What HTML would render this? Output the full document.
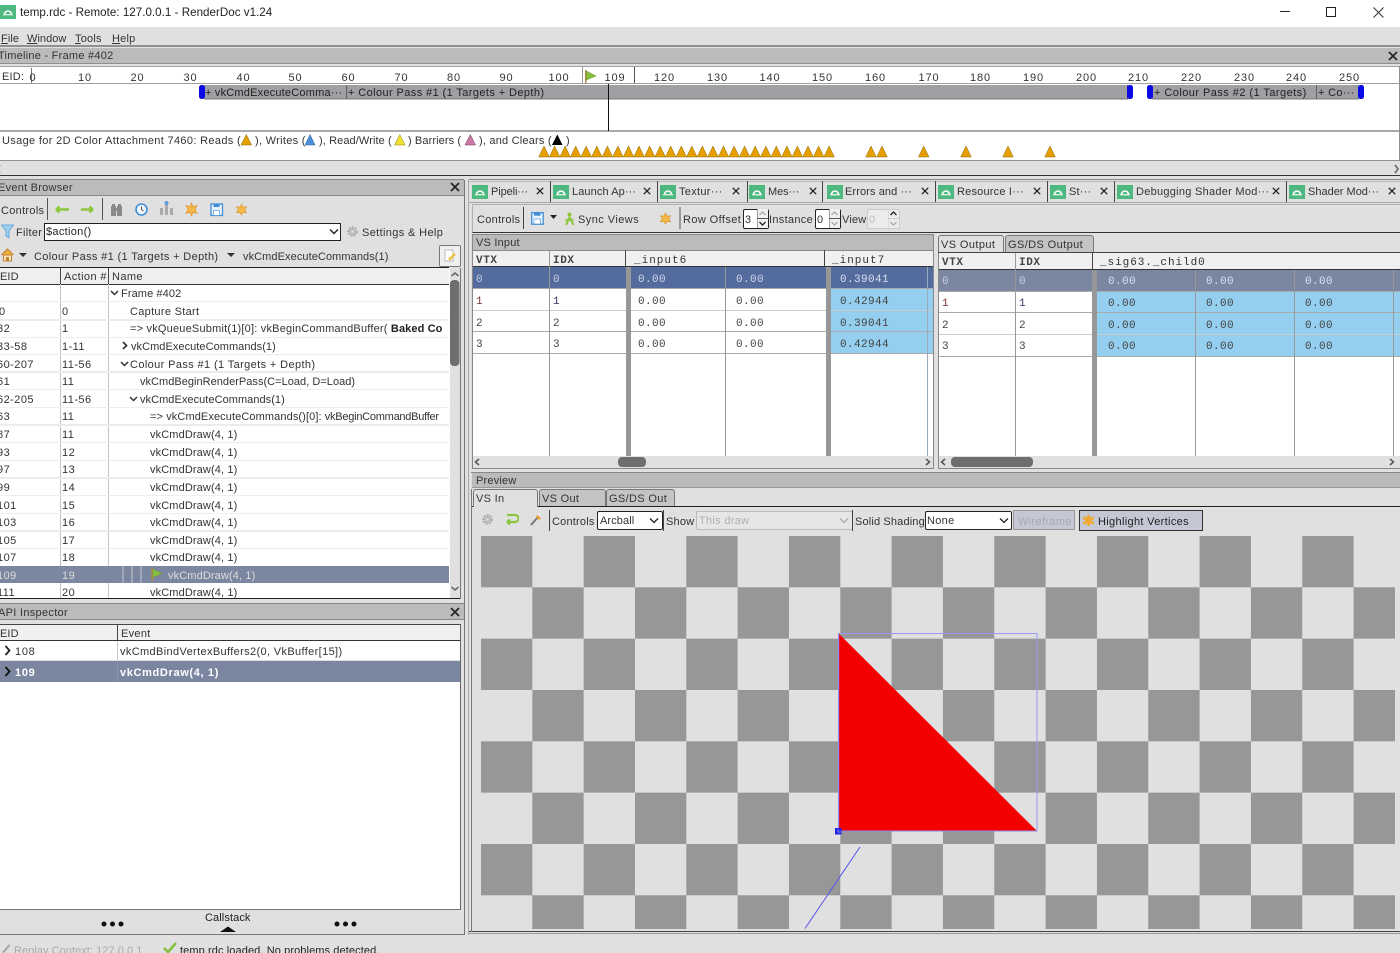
<!DOCTYPE html>
<html><head><meta charset="utf-8"><title>temp.rdc - Remote: 127.0.0.1 - RenderDoc v1.24</title>
<style>
html,body{margin:0;padding:0;width:1400px;height:953px;overflow:hidden;background:#e0e0e0}
body{position:relative;font-family:"Liberation Sans","Noto Sans CJK JP",sans-serif;font-size:11px;color:#333;letter-spacing:.45px}
div,svg{position:absolute}
.t{white-space:nowrap;line-height:14px;height:14px;margin-top:1px}
.b{background:#000}
.m{font-family:"Liberation Mono",monospace;font-size:11px;letter-spacing:.6px;color:#444;margin-top:2px}
.mb{font-family:"Liberation Mono",monospace;font-size:11px;font-weight:bold;letter-spacing:.6px;color:#444;margin-top:2px}
.bar{background:#bbb;height:15px}
.x{font-size:0}
.w{background:#fff}
.s{color:#ddd}
.d{letter-spacing:.12px}
</style></head><body>
<svg width="0" height="0" style="left:0;top:0"><defs>
<symbol id="ic" viewBox="0 0 16 14"><rect width="16" height="14" fill="#4db87f"/><path d="M4.500 9.500a3.500 3.500 0 0 1 7 0" fill="none" stroke="#fff" stroke-width="1.600"/><rect x="3" y="9" width="10" height="1.400" fill="#d8f0e2"/></symbol>
<symbol id="cl" viewBox="0 0 10 10"><path d="M1 1L9 9M9 1L1 9" stroke="#222" stroke-width="1.600" fill="none"/></symbol>
<symbol id="star" viewBox="0 0 14 14"><path d="M7 1l1.600 3.500 3.900-.5-2 3.300 2 3.300-3.900-.4L7 13l-1.600-2.800-3.900.4 2-3.300-2-3.300 3.900.5z" fill="#f5b84a" stroke="#d89020" stroke-width=".6"/></symbol>
<symbol id="flag" viewBox="0 0 12 14"><rect x="0" y="0" width="1.600" height="14" fill="#b08a40"/><path d="M1.600 1L11.500 6 1.600 10z" fill="#86c040" stroke="#6a9a30" stroke-width=".5"/></symbol>
</defs></svg>

<!-- title bar -->
<div class="w" style="left:0;top:0;width:1400px;height:27px"></div>
<svg style="left:0;top:4px" width="16" height="16"><use href="#ic" width="16" height="16"/></svg>
<div class="t" style="left:20px;top:5px;font-size:11.600px;letter-spacing:.02px;color:#222">temp.rdc - Remote: 127.0.0.1 - RenderDoc v1.24</div>
<div style="left:1280px;top:11px;width:10px;height:1px;background:#222"></div>
<div style="left:1326px;top:7px;width:8px;height:8px;border:1.500px solid #222"></div>
<svg style="left:1373px;top:7px" width="11" height="11"><path d="M.5 .5L10.500 10.500M10.500 .5L.5 10.500" stroke="#333" stroke-width="1"/></svg>

<!-- menu -->
<div class="t" style="left:1px;top:31px;letter-spacing:.1px"><u>F</u>ile</div>
<div class="t" style="left:27px;top:31px;letter-spacing:.05px"><u>W</u>indow</div>
<div class="t" style="left:75px;top:31px;letter-spacing:.2px"><u>T</u>ools</div>
<div class="t" style="left:112px;top:31px;letter-spacing:.2px"><u>H</u>elp</div>
<div style="left:0;top:45px;width:1400px;height:2px;background:#909090"></div>
<div class="b" style="left:0;top:47.500px;width:1400px;height:1px"></div>

<!-- timeline -->
<div class="bar" style="left:0;top:48px;width:1400px"></div>
<div class="t" style="left:-2px;top:48px;letter-spacing:.25px">Timeline - Frame #402</div>
<svg style="left:1388px;top:51px" width="10" height="10"><use href="#cl" width="10" height="10"/></svg>
<div style="left:0;top:63px;width:1400px;height:1px;background:#8f8f8f"></div>
<div class="w" style="left:0;top:67px;width:1399px;height:93px"></div>
<div style="left:0;top:66px;width:1400px;height:1px;background:#a0a0a0"></div>
<div style="left:0;top:83px;width:1399px;height:1px;background:#a0a0a0"></div>
<div style="left:0;top:130px;width:1399px;height:2px;background:#a8a8a8"></div>
<div style="left:0;top:160px;width:1399px;height:1px;background:#909090"></div>
<div style="left:1399px;top:66px;width:1px;height:95px;background:#909090"></div>
<div style="left:0;top:175px;width:1400px;height:1px;background:#333"></div>
<div class="t" style="left:2px;top:69px;letter-spacing:.2px">EID:</div>
<div style="left:31px;top:68px;width:1px;height:15px;background:#777"></div>
<svg style="left:0;top:0" width="1400" height="180" font-family="Liberation Sans" font-size="11" fill="#333" text-anchor="middle" letter-spacing=".9">
<text x="33" y="81">0</text><text x="85" y="81">10</text><text x="137.500" y="81">20</text><text x="190.500" y="81">30</text><text x="243.500" y="81">40</text><text x="295.500" y="81">50</text><text x="348.500" y="81">60</text><text x="401.500" y="81">70</text><text x="454" y="81">80</text><text x="506.500" y="81">90</text><text x="559" y="81">100</text><text x="615" y="81">109</text><text x="664.500" y="81">120</text><text x="717.500" y="81">130</text><text x="770" y="81">140</text><text x="822.500" y="81">150</text><text x="875.500" y="81">160</text><text x="929" y="81">170</text><text x="980.500" y="81">180</text><text x="1033.500" y="81">190</text><text x="1086.500" y="81">200</text><text x="1138.500" y="81">210</text><text x="1191.500" y="81">220</text><text x="1244.500" y="81">230</text><text x="1296.500" y="81">240</text><text x="1349.500" y="81">250</text>
<rect x="582" y="67" width="1" height="16" fill="#999"/><rect x="634" y="67" width="1" height="16" fill="#555"/>
<path d="M585 70h1.500v13H585z" fill="#b08a40"/><path d="M586.500 71L596 76L586.500 80z" fill="#86c040" stroke="#6a9a30" stroke-width=".5"/>
<rect x="204" y="85" width="924" height="14" fill="#a0a0a4"/>
<rect x="1152" y="85" width="207" height="14" fill="#a0a0a4"/>
<rect x="204" y="98.500" width="924" height="1" fill="#777"/><rect x="1152" y="98.500" width="207" height="1" fill="#777"/>
<rect x="346" y="85" width="1.200" height="14" fill="#666"/><rect x="1316" y="85" width="1" height="14" fill="#666"/><rect x="1127" y="85" width="1" height="14" fill="#666"/>
<rect x="199" y="85" width="6" height="14" rx="2.500" fill="#0a0ae6"/><rect x="1127" y="85" width="6" height="14" rx="2.500" fill="#0a0ae6"/><rect x="1147" y="85" width="6" height="14" rx="2.500" fill="#0a0ae6"/><rect x="1358" y="85" width="6" height="14" rx="2.500" fill="#0a0ae6"/>
<rect x="608" y="84" width="1" height="47" fill="#111"/>
<path fill="#e69f00" stroke="#8a6a10" stroke-width=".5" d="M538.700 157l5.300-11 5.300 11zM549.300 157l5.300-11 5.300 11zM559.800 157l5.300-11 5.300 11zM570.400 157l5.300-11 5.300 11zM580.900 157l5.300-11 5.300 11zM591.500 157l5.300-11 5.300 11zM602.100 157l5.300-11 5.300 11zM612.600 157l5.300-11 5.300 11zM623.200 157l5.300-11 5.300 11zM633.700 157l5.300-11 5.300 11zM644.300 157l5.300-11 5.300 11zM654.900 157l5.300-11 5.300 11zM665.400 157l5.300-11 5.300 11zM676 157l5.300-11 5.300 11zM686.500 157l5.300-11 5.300 11zM697.100 157l5.300-11 5.300 11zM707.700 157l5.300-11 5.300 11zM718.200 157l5.300-11 5.300 11zM728.800 157l5.300-11 5.300 11zM739.300 157l5.300-11 5.300 11zM749.900 157l5.300-11 5.300 11zM760.500 157l5.300-11 5.300 11zM771 157l5.300-11 5.300 11zM781.600 157l5.300-11 5.300 11zM792.100 157l5.300-11 5.300 11zM802.700 157l5.300-11 5.300 11zM813.300 157l5.300-11 5.300 11zM823.800 157l5.300-11 5.300 11zM865.700 157l5.300-11 5.300 11zM876.700 157l5.300-11 5.300 11zM918.400 157l5.300-11 5.300 11zM960.700 157l5.300-11 5.300 11zM1002.700 157l5.300-11 5.300 11zM1044.700 157l5.300-11 5.300 11z"/>
<path fill="#e69f00" stroke="#8a6a10" stroke-width=".5" d="M241 145l5.300-10.500 5.300 10.500z"/>
<path fill="#4a90d9" stroke="#2a5a90" stroke-width=".5" d="M305 145l5-10.500 5 10.500z"/>
<path fill="#f0e030" stroke="#8a8010" stroke-width=".5" d="M394.500 145l5.300-10.500 5.300 10.500z"/>
<path fill="#cc79a7" stroke="#704060" stroke-width=".5" d="M465 145l5.300-10.500 5.300 10.500z"/>
<path fill="#000" d="M552 145l5.300-10.500 5.300 10.500z"/>
<path d="M1395 165l3 4-3 4" fill="none" stroke="#666" stroke-width="1.600"/>
<path d="M0 165l-3 4 3 4" fill="none" stroke="#666" stroke-width="1.600"/>
</svg>
<div class="t" style="left:205px;top:85px;letter-spacing:.2px;color:#222">+ vkCmdExecuteComma···</div>
<div class="t" style="left:348px;top:85px;letter-spacing:.4px;color:#222">+ Colour Pass #1 (1 Targets + Depth)</div>
<div class="t" style="left:1154px;top:85px;letter-spacing:.45px;color:#222">+ Colour Pass #2 (1 Targets)</div>
<div class="t" style="left:1318px;top:85px;letter-spacing:.3px;color:#222">+ Co···</div>
<div class="t" style="left:2px;top:133px;letter-spacing:.34px">Usage for 2D Color Attachment 7460: Reads (</div>
<div class="t" style="left:255px;top:133px;letter-spacing:.3px">), Writes (</div>
<div class="t" style="left:319px;top:133px;letter-spacing:.1px">), Read/Write (</div>
<div class="t" style="left:408px;top:133px;letter-spacing:.1px">) Barriers (</div>
<div class="t" style="left:479px;top:133px;letter-spacing:.2px">), and Clears (</div>
<div class="t" style="left:566px;top:133px">)</div>

<!-- Event browser -->
<div style="left:0;top:179px;width:464px;height:1px;background:#888"></div>
<div class="bar" style="left:0;top:180px;width:464px"></div>
<div class="t" style="left:-2px;top:180px;letter-spacing:.25px">Event Browser</div>
<svg style="left:450px;top:182px" width="10" height="10"><use href="#cl" width="10" height="10"/></svg>
<div style="left:0;top:195px;width:464px;height:1px;background:#888"></div>
<div style="left:464px;top:180px;width:1px;height:755px;background:#777"></div>
<div style="left:468px;top:180px;width:1px;height:755px;background:#aaa"></div>
<div class="t" style="left:1px;top:203px;letter-spacing:.3px">Controls</div>
<div style="left:47px;top:198px;width:1px;height:22px;background:#555"></div>
<div style="left:102px;top:198px;width:1px;height:22px;background:#555"></div>
<svg style="left:0;top:196px" width="260" height="28">
<path d="M56 13.500h7m-7 0l3.500-3m-3.500 3l3.500 3M63 13.500h6" stroke="#8dc63f" stroke-width="2.400" fill="none"/>
<path d="M81 13.500h12m0 0l-3.500-3m3.500 3l-3.500 3" stroke="#8dc63f" stroke-width="2.400" fill="none"/>
<path d="M112 8h3v2h1v10h-5V10h1zM118 8h3v2h1v10h-5V10h1zM116 12h1v3h-1z" fill="#8a8a8a"/>
<circle cx="141.500" cy="13.500" r="5.500" fill="#f0f4ff" stroke="#3f8fd8" stroke-width="1.600"/><path d="M141.500 10.500v3l2 1.500" stroke="#555" fill="none"/>
<path d="M160 12h3v7h-3zM165 8h3v11h-3zM170 12h3v7h-3z" fill="#aaa"/><circle cx="166.500" cy="7" r="2" fill="#5a9ed8"/>
<path d="M191.500 7l1.500 4 4-1.500-2 4 2 4-4-1.500-1.500 4-1.500-4-4 1.500 2-4-2-4 4 1.500z" fill="#f5b84a" stroke="#e09020" stroke-width=".7"/>
<rect x="211" y="8" width="11.500" height="11.500" fill="#e8f2fb" stroke="#3f8fd8" stroke-width="1.300"/><rect x="213.500" y="8" width="6" height="3" fill="#3f8fd8"/><rect x="213.500" y="14.500" width="6" height="5" fill="#fff" stroke="#3f8fd8" stroke-width=".6"/>
</svg>
<svg style="left:235px;top:203px" width="13" height="13"><use href="#star" width="13" height="13"/></svg>
<svg style="left:1px;top:224px" width="13" height="16"><path d="M.5 1h12L8 7v7l-3-2V7z" fill="#9fd0f0" stroke="#6aa8d8"/></svg>
<div class="t" style="left:16px;top:225px;letter-spacing:.3px">Filter</div>
<div class="w" style="left:44px;top:223px;width:295px;height:16px;border:1px solid #222"></div>
<div class="t" style="left:46px;top:224px;letter-spacing:.3px;color:#222">$action()</div>
<svg style="left:329px;top:228px" width="10" height="8"><path d="M1 1.500l4 4 4-4" fill="none" stroke="#222" stroke-width="1.400"/></svg>
<svg style="left:346px;top:225px" width="13" height="13"><circle cx="6.500" cy="6.500" r="4" fill="none" stroke="#aaa" stroke-width="2.400" stroke-dasharray="2 1"/><circle cx="6.500" cy="6.500" r="2" fill="#ddd" stroke="#aaa"/></svg>
<div class="t" style="left:362px;top:225px;letter-spacing:.36px">Settings &amp; Help</div>
<svg style="left:1px;top:248px" width="13" height="14"><path d="M.5 7L6.500 1l6 6" fill="#f0b040" stroke="#c08030"/><path d="M2.500 7h8v6h-8z" fill="#f8e8c0" stroke="#c08030"/><rect x="5" y="9" width="3" height="4" fill="#c08030"/></svg>
<svg style="left:19px;top:253px" width="8" height="5"><path d="M0 0h8L4 4z" fill="#333"/></svg>
<svg style="left:227px;top:253px" width="8" height="5"><path d="M0 0h8L4 4z" fill="#333"/></svg>
<div class="t" style="left:34px;top:249px;letter-spacing:.35px">Colour Pass #1 (1 Targets + Depth)</div>
<div class="t" style="left:243px;top:249px;letter-spacing:.08px">vkCmdExecuteCommands(1)</div>
<div style="left:439px;top:245px;width:20px;height:20px;border:1px solid #777;border-radius:2px;background:#efefef"></div>
<svg style="left:443px;top:249px" width="14" height="14"><path d="M2 1h8v11H2z" fill="#fff" stroke="#bbb"/><path d="M5 10l6-6 2 1.500-6 6z" fill="#f0c040"/></svg>

<!-- event table -->
<div class="w" style="left:0;top:268px;width:450px;height:330px"></div>
<div style="left:0;top:267px;width:449px;height:16px;background:#f0f0f0;border-top:1px solid #222;border-bottom:1px solid #333"></div>
<div class="t" style="left:0;top:269px;letter-spacing:.1px">EID</div>
<div class="t" style="left:64px;top:269px;letter-spacing:.4px">Action #</div>
<div class="t" style="left:112px;top:269px;letter-spacing:.4px">Name</div>
<div style="left:60px;top:268px;width:1px;height:16px;background:#444"></div>
<div style="left:108px;top:268px;width:1px;height:16px;background:#444"></div>
<div style="left:60px;top:284px;width:1px;height:314px;background:#c4c4c4"></div>
<div style="left:108px;top:284px;width:1px;height:314px;background:#c4c4c4"></div>
<!-- row seps -->
<div style="left:0;top:301px;width:449px;height:1px;background:#eee"></div>
<div style="left:0;top:319px;width:449px;height:2px;background:#ececec"></div>
<div style="left:0;top:337px;width:449px;height:1px;background:#eee"></div>
<div style="left:0;top:354px;width:449px;height:1px;background:#eee"></div>
<div style="left:0;top:371px;width:449px;height:2px;background:#ececec"></div>
<div style="left:0;top:389px;width:449px;height:1px;background:#eee"></div>
<div style="left:0;top:407px;width:449px;height:1px;background:#eee"></div>
<div style="left:0;top:424px;width:449px;height:2px;background:#ececec"></div>
<div style="left:0;top:442px;width:449px;height:1px;background:#eee"></div>
<div style="left:0;top:460px;width:449px;height:1px;background:#eee"></div>
<div style="left:0;top:477px;width:449px;height:2px;background:#ececec"></div>
<div style="left:0;top:495px;width:449px;height:1px;background:#eee"></div>
<div style="left:0;top:513px;width:449px;height:1px;background:#eee"></div>
<div style="left:0;top:530px;width:449px;height:2px;background:#ececec"></div>
<div style="left:0;top:548px;width:449px;height:1px;background:#eee"></div>
<div style="left:0;top:566px;width:449px;height:17px;background:#7b86a0"></div>
<svg style="left:0;top:284px" width="450" height="314" fill="none" stroke="#333" stroke-width="1.500">
<path d="M111 7l3.500 3.500 3.500-3.500M121 78l3.500 3.500 3.500-3.500M130 113l3.500 3.500 3.500-3.500"/>
<path d="M123 58l3.500 3.500-3.500 3.500" stroke-width="1.700"/>
<path d="M123 282v17M132 282v17M141 282v17" stroke="#c8c8d0" stroke-width="1"/>
</svg>
<svg style="left:151px;top:568px" width="12" height="13"><use href="#flag" width="12" height="13"/></svg>
<div class="t" style="left:121px;top:286px;letter-spacing:.1px">Frame #402</div>
<div class="t" style="left:-1px;top:304px">0</div><div class="t" style="left:62px;top:304px">0</div><div class="t" style="left:130px;top:304px;letter-spacing:.3px">Capture Start</div>
<div class="t" style="left:-3px;top:321px">32</div><div class="t" style="left:62px;top:321px">1</div><div class="t" style="left:130px;top:321px;letter-spacing:.2px;width:317px;overflow:hidden">=&gt; vkQueueSubmit(1)[0]: vkBeginCommandBuffer( <b style="color:#222;letter-spacing:.1px">Baked Co</b></div>
<div class="t" style="left:-3px;top:339px">33-58</div><div class="t" style="left:62px;top:339px">1-11</div><div class="t" style="left:131px;top:339px;letter-spacing:.05px">vkCmdExecuteCommands(1)</div>
<div class="t" style="left:-3px;top:357px">60-207</div><div class="t" style="left:62px;top:357px">11-56</div><div class="t" style="left:130px;top:357px;letter-spacing:.38px">Colour Pass #1 (1 Targets + Depth)</div>
<div class="t" style="left:-3px;top:374px">61</div><div class="t" style="left:62px;top:374px">11</div><div class="t" style="left:140px;top:374px;letter-spacing:.03px">vkCmdBeginRenderPass(C=Load, D=Load)</div>
<div class="t" style="left:-3px;top:392px">62-205</div><div class="t" style="left:62px;top:392px">11-56</div><div class="t" style="left:140px;top:392px;letter-spacing:.05px">vkCmdExecuteCommands(1)</div>
<div class="t" style="left:-3px;top:409px">63</div><div class="t" style="left:62px;top:409px">11</div><div class="t" style="left:150px;top:409px;letter-spacing:.1px;width:299px;overflow:hidden">=&gt; vkCmdExecuteCommands()[0]: <span style="letter-spacing:-.25px">vkBeginCommandBuffer</span></div>
<div class="t" style="left:-3px;top:427px">87</div><div class="t" style="left:62px;top:427px">11</div><div class="t d" style="left:150px;top:427px">vkCmdDraw(4, 1)</div>
<div class="t" style="left:-3px;top:445px">93</div><div class="t" style="left:62px;top:445px">12</div><div class="t d" style="left:150px;top:445px">vkCmdDraw(4, 1)</div>
<div class="t" style="left:-3px;top:462px">97</div><div class="t" style="left:62px;top:462px">13</div><div class="t d" style="left:150px;top:462px">vkCmdDraw(4, 1)</div>
<div class="t" style="left:-3px;top:480px">99</div><div class="t" style="left:62px;top:480px">14</div><div class="t d" style="left:150px;top:480px">vkCmdDraw(4, 1)</div>
<div class="t" style="left:-3px;top:498px">101</div><div class="t" style="left:62px;top:498px">15</div><div class="t d" style="left:150px;top:498px">vkCmdDraw(4, 1)</div>
<div class="t" style="left:-3px;top:515px">103</div><div class="t" style="left:62px;top:515px">16</div><div class="t d" style="left:150px;top:515px">vkCmdDraw(4, 1)</div>
<div class="t" style="left:-3px;top:533px">105</div><div class="t" style="left:62px;top:533px">17</div><div class="t d" style="left:150px;top:533px">vkCmdDraw(4, 1)</div>
<div class="t" style="left:-3px;top:550px">107</div><div class="t" style="left:62px;top:550px">18</div><div class="t d" style="left:150px;top:550px">vkCmdDraw(4, 1)</div>
<div class="t s" style="left:-3px;top:568px">109</div><div class="t s" style="left:62px;top:568px">19</div><div class="t s d" style="left:168px;top:568px">vkCmdDraw(4, 1)</div>
<div style="left:0;top:584px;width:450px;height:14px;overflow:hidden;background:#fff">
<div class="t" style="left:-3px;top:1px">111</div><div class="t" style="left:62px;top:1px">20</div><div class="t d" style="left:150px;top:1px">vkCmdDraw(4, 1)</div>
<div style="left:60px;top:0;width:1px;height:14px;background:#c4c4c4"></div><div style="left:108px;top:0;width:1px;height:14px;background:#c4c4c4"></div></div>
<div style="left:0;top:598px;width:461px;height:1px;background:#222"></div>
<div style="left:460px;top:268px;width:1px;height:331px;background:#777"></div>
<svg style="left:450px;top:268px" width="10" height="330"><rect width="10" height="330" fill="#e0e0e0"/><path d="M1.500 8l3.500-3 3.500 3M1.500 319l3.500 3 3.500-3" fill="none" stroke="#666" stroke-width="1.500"/><rect x="0" y="12" width="9.500" height="86" rx="4" fill="#6e6e6e"/></svg>

<!-- API inspector -->
<div style="left:0;top:601px;width:464px;height:3px;border-bottom:1px solid #888;box-sizing:border-box"></div>
<div class="bar" style="left:0;top:604px;width:464px"></div>
<div class="t" style="left:-2px;top:605px;letter-spacing:.3px">API Inspector</div>
<svg style="left:450px;top:607px" width="10" height="10"><use href="#cl" width="10" height="10"/></svg>
<div style="left:0;top:619px;width:464px;height:1px;background:#888"></div>
<div class="w" style="left:0;top:624px;width:460px;height:285px"></div>
<div style="left:0;top:624px;width:460px;height:15px;background:#f0f0f0;border-top:1px solid #444;border-bottom:1px solid #333"></div>
<div class="t" style="left:0;top:626px;letter-spacing:.1px">EID</div>
<div class="t" style="left:121px;top:626px;letter-spacing:.3px">Event</div>
<div style="left:117px;top:625px;width:1px;height:15px;background:#444"></div>
<div style="left:117px;top:641px;width:1px;height:41px;background:#c4c4c4"></div>
<div style="left:0;top:660px;width:460px;height:1px;background:#ddd"></div>
<div style="left:0;top:661px;width:460px;height:21px;background:#7b86a0"></div>
<div style="left:117px;top:661px;width:1px;height:21px;background:#8a94ac"></div>
<svg style="left:4px;top:645px" width="8" height="34" fill="none" stroke="#222" stroke-width="1.800"><path d="M1.500 1l4 4.500-4 4.500"/><path d="M1.500 22l4 4.500-4 4.500" stroke="#111"/></svg>
<div class="t" style="left:15px;top:644px;letter-spacing:.7px">108</div>
<div class="t" style="left:120px;top:644px;letter-spacing:.36px">vkCmdBindVertexBuffers2(0, VkBuffer[15])</div>
<div class="t" style="left:15px;top:665px;letter-spacing:.7px;color:#fff;font-weight:bold">109</div>
<div class="t" style="left:120px;top:665px;letter-spacing:.65px;color:#fff;font-weight:bold">vkCmdDraw(4, 1)</div>
<div style="left:460px;top:624px;width:1px;height:285px;background:#666"></div>
<div style="left:0;top:909px;width:461px;height:1px;background:#777"></div>
<div class="t" style="left:205px;top:910px;letter-spacing:.1px;color:#222">Callstack</div>
<svg style="left:100px;top:919px" width="260" height="14"><circle cx="4" cy="5" r="2.500" fill="#111"/><circle cx="12.500" cy="5" r="2.500" fill="#111"/><circle cx="21" cy="5" r="2.500" fill="#111"/><circle cx="237" cy="5" r="2.500" fill="#111"/><circle cx="245.500" cy="5" r="2.500" fill="#111"/><circle cx="254" cy="5" r="2.500" fill="#111"/><path d="M120 13l8-5.500 8 5.500z" fill="#111"/></svg>
<div style="left:0;top:934px;width:465px;height:1px;background:#777"></div>

<!-- status -->
<svg style="left:1px;top:943px" width="10" height="10"><path d="M1 9L8 1l1.500 1.500-7 8z" fill="#aaa"/></svg>
<div class="t" style="left:14px;top:943px;letter-spacing:.05px;color:#aaa">Replay Context: 127.0.0.1</div>
<svg style="left:163px;top:942px" width="14" height="11"><path d="M1 6l4 4 8-9" fill="none" stroke="#86c040" stroke-width="2.600"/></svg>
<div class="t" style="left:180px;top:943px;letter-spacing:.1px;color:#222">temp.rdc loaded. No problems detected.</div>

<!-- Tabs -->
<div style="left:469px;top:179px;width:931px;height:1px;background:#888"></div>
<div style="left:469px;top:181px;width:931px;height:1px;background:#b8b8b8"></div>
<div style="left:469px;top:202px;width:931px;height:1px;background:#a8a8a8"></div>
<div style="left:550px;top:181px;width:1px;height:21px;background:#444"></div>
<div style="left:657px;top:181px;width:1px;height:21px;background:#444"></div>
<div style="left:747px;top:181px;width:1px;height:21px;background:#444"></div>
<div style="left:822px;top:181px;width:1px;height:21px;background:#444"></div>
<div style="left:935px;top:181px;width:1px;height:21px;background:#444"></div>
<div style="left:1047px;top:181px;width:1px;height:21px;background:#444"></div>
<div style="left:1114px;top:181px;width:1px;height:21px;background:#444"></div>
<div style="left:1286px;top:181px;width:1px;height:21px;background:#444"></div>
<svg style="left:472px;top:185px" width="16" height="14"><use href="#ic"/></svg><div class="t" style="left:491px;top:184px;letter-spacing:-.1px">Pipeli···</div><svg style="left:536px;top:187px" width="8" height="8"><use href="#cl" width="8" height="8"/></svg>
<svg style="left:553px;top:185px" width="16" height="14"><use href="#ic"/></svg><div class="t" style="left:572px;top:184px;letter-spacing:.1px">Launch Ap···</div><svg style="left:643px;top:187px" width="8" height="8"><use href="#cl" width="8" height="8"/></svg>
<svg style="left:660px;top:185px" width="16" height="14"><use href="#ic"/></svg><div class="t" style="left:679px;top:184px;letter-spacing:.3px">Textur···</div><svg style="left:732px;top:187px" width="8" height="8"><use href="#cl" width="8" height="8"/></svg>
<svg style="left:749px;top:185px" width="16" height="14"><use href="#ic"/></svg><div class="t" style="left:768px;top:184px;letter-spacing:-.1px">Mes···</div><svg style="left:809px;top:187px" width="8" height="8"><use href="#cl" width="8" height="8"/></svg>
<svg style="left:827px;top:185px" width="16" height="14"><use href="#ic"/></svg><div class="t" style="left:845px;top:184px;letter-spacing:.1px">Errors and ···</div><svg style="left:921px;top:187px" width="8" height="8"><use href="#cl" width="8" height="8"/></svg>
<svg style="left:938px;top:185px" width="16" height="14"><use href="#ic"/></svg><div class="t" style="left:957px;top:184px;letter-spacing:.2px">Resource I···</div><svg style="left:1033px;top:187px" width="8" height="8"><use href="#cl" width="8" height="8"/></svg>
<svg style="left:1050px;top:185px" width="16" height="14"><use href="#ic"/></svg><div class="t" style="left:1069px;top:184px;letter-spacing:.2px">St···</div><svg style="left:1100px;top:187px" width="8" height="8"><use href="#cl" width="8" height="8"/></svg>
<svg style="left:1117px;top:185px" width="16" height="14"><use href="#ic"/></svg><div class="t" style="left:1136px;top:184px;letter-spacing:.27px">Debugging Shader Mod···</div><svg style="left:1272px;top:187px" width="8" height="8"><use href="#cl" width="8" height="8"/></svg>
<svg style="left:1289px;top:185px" width="16" height="14"><use href="#ic"/></svg><div class="t" style="left:1308px;top:184px;letter-spacing:.0px">Shader Mod···</div><svg style="left:1388px;top:187px" width="8" height="8"><use href="#cl" width="8" height="8"/></svg>

<!-- mesh toolbar -->
<div style="left:472px;top:204px;width:928px;height:27px;border-top:1px solid #b0b0b0;border-left:1px solid #b0b0b0;border-bottom:1px solid #333;box-sizing:content-box"></div>
<div class="t" style="left:477px;top:212px;letter-spacing:.3px">Controls</div>
<div style="left:523px;top:207px;width:1px;height:22px;background:#444"></div>
<svg style="left:531px;top:212px" width="13" height="13"><rect x=".7" y=".7" width="11.500" height="11.500" fill="#e8f2fb" stroke="#3f8fd8" stroke-width="1.300"/><rect x="3" y=".7" width="6.500" height="3" fill="#3f8fd8"/><rect x="3" y="7" width="6.500" height="5" fill="#fff" stroke="#3f8fd8" stroke-width=".6"/></svg>
<svg style="left:550px;top:215px" width="7" height="5"><path d="M0 0h7L3.500 4z" fill="#222"/></svg>
<svg style="left:564px;top:212px" width="12" height="14"><circle cx="5.500" cy="2.500" r="2" fill="#8dc63f"/><path d="M5.500 5L2 13M5.500 5l4 8M1.500 8h8" stroke="#8dc63f" stroke-width="2" fill="none"/></svg>
<div class="t" style="left:578px;top:212px;letter-spacing:.45px">Sync Views</div>
<svg style="left:659px;top:212px" width="13" height="13"><use href="#star" width="13" height="13"/></svg>
<div style="left:679px;top:207px;width:2px;height:22px;background:#999"></div>
<div class="t" style="left:683px;top:212px;letter-spacing:.4px">Row Offset</div>
<div class="w" style="left:743px;top:209px;width:24px;height:18px;border:1px solid #222;border-radius:2px"></div>
<div class="t" style="left:745px;top:212px;font-size:11px">3</div>
<svg style="left:757px;top:209px" width="11" height="19"><rect width="11" height="19" fill="#f0f0f0"/><path d="M0 0v19M0 9.500h11" stroke="#555"/><path d="M2.500 6l3-3 3 3" fill="none" stroke="#aaa" stroke-width="1.300"/><path d="M2.500 13l3 3 3-3" fill="none" stroke="#222" stroke-width="1.300"/></svg>
<div class="t" style="left:769px;top:212px;letter-spacing:.3px">Instance</div>
<div class="w" style="left:815px;top:209px;width:24px;height:18px;border:1px solid #222;border-radius:2px"></div>
<div class="t" style="left:817px;top:212px">0</div>
<svg style="left:829px;top:209px" width="11" height="19"><rect width="11" height="19" fill="#f0f0f0"/><path d="M0 0v19M0 9.500h11" stroke="#555"/><path d="M2.500 6l3-3 3 3M2.500 13l3 3 3-3" fill="none" stroke="#aaa" stroke-width="1.300"/></svg>
<div class="t" style="left:842px;top:212px;letter-spacing:.2px">View</div>
<div style="left:867px;top:209px;width:31px;height:18px;border:1px solid #ccc;border-radius:2px;background:#ececec"></div>
<div class="t" style="left:869px;top:212px;color:#bbb">0</div>
<svg style="left:888px;top:209px" width="11" height="19"><path d="M0 0v19M0 9.500h11" stroke="#ccc"/><path d="M2.500 6l3-3 3 3" fill="none" stroke="#222" stroke-width="1.300"/><path d="M2.500 13l3 3 3-3" fill="none" stroke="#aaa" stroke-width="1.300"/></svg>

<!-- VS Input -->
<div style="left:472px;top:234px;width:462px;height:235px;border:1px solid #888;box-sizing:border-box"></div>
<div class="bar" style="left:473px;top:235px;width:460px"></div>
<div class="t" style="left:476px;top:235px;letter-spacing:.2px">VS Input</div>
<div style="left:473px;top:250px;width:460px;height:17px;background:#f0f0f0;border-top:1px solid #888;box-sizing:border-box"></div>
<div class="w" style="left:473px;top:267px;width:460px;height:189px"></div>
<div style="left:473px;top:266px;width:460px;height:1px;background:#333"></div>
<div class="mb t" style="left:476px;top:252px">VTX</div>
<div class="mb t" style="left:553px;top:252px">IDX</div>
<div class="mb t" style="left:634px;top:252px;font-weight:normal;letter-spacing:1px;color:#333">_input6</div>
<div class="mb t" style="left:832px;top:252px;font-weight:normal;letter-spacing:1px;color:#333">_input7</div>
<div style="left:473px;top:267px;width:460px;height:21px;background:#546b9e"></div>
<div style="left:831px;top:289px;width:102px;height:64px;background:#95cfef"></div>
<div style="left:473px;top:288px;width:460px;height:1px;background:#aaa"></div>
<div style="left:473px;top:310px;width:460px;height:1px;background:#ccc"></div>
<div style="left:473px;top:331px;width:460px;height:1px;background:#aaa"></div>
<div style="left:473px;top:353px;width:460px;height:1px;background:#aaa"></div>
<div style="left:549px;top:250px;width:1px;height:206px;background:#999"></div>
<div style="left:725px;top:267px;width:1px;height:189px;background:#999"></div>
<div style="left:927px;top:267px;width:1px;height:189px;background:#9ab"></div>
<div style="left:626px;top:267px;width:5px;height:189px;background:#979797"></div>
<div style="left:826px;top:267px;width:5px;height:189px;background:#979797"></div>
<div style="left:625px;top:250px;width:1px;height:17px;background:#444"></div>
<div style="left:824px;top:250px;width:1px;height:17px;background:#444"></div>
<div class="m t" style="left:476px;top:271px;color:#c8d0e0">0</div><div class="m t" style="left:553px;top:271px;color:#c8d0e0">0</div><div class="m t" style="left:638px;top:271px;color:#d0d8e8;letter-spacing:.4px">0.00</div><div class="m t" style="left:736px;top:271px;color:#d0d8e8;letter-spacing:.4px">0.00</div><div class="m t" style="left:840px;top:271px;color:#d8e0f0;letter-spacing:.4px">0.39041</div>
<div class="m t" style="left:476px;top:293px;color:#733">1</div><div class="m t" style="left:553px;top:293px;color:#336">1</div><div class="m t" style="left:638px;top:293px;letter-spacing:.4px">0.00</div><div class="m t" style="left:736px;top:293px;letter-spacing:.4px">0.00</div><div class="m t" style="left:840px;top:293px;letter-spacing:.4px">0.42944</div>
<div class="m t" style="left:476px;top:315px">2</div><div class="m t" style="left:553px;top:315px">2</div><div class="m t" style="left:638px;top:315px;letter-spacing:.4px">0.00</div><div class="m t" style="left:736px;top:315px;letter-spacing:.4px">0.00</div><div class="m t" style="left:840px;top:315px;letter-spacing:.4px">0.39041</div>
<div class="m t" style="left:476px;top:336px">3</div><div class="m t" style="left:553px;top:336px">3</div><div class="m t" style="left:638px;top:336px;letter-spacing:.4px">0.00</div><div class="m t" style="left:736px;top:336px;letter-spacing:.4px">0.00</div><div class="m t" style="left:840px;top:336px;letter-spacing:.4px">0.42944</div>
<svg style="left:473px;top:456px" width="460" height="12"><rect width="460" height="12" fill="#e0e0e0"/><path d="M6 3L2.500 6 6 9M453 3l3.500 3L453 9" fill="none" stroke="#555" stroke-width="1.500"/><rect x="145" y="1" width="28" height="10" rx="4" fill="#6e6e6e"/></svg>

<!-- VS Output -->
<div style="left:938px;top:252px;width:462px;height:217px;border:1px solid #888;border-right:0;box-sizing:border-box"></div>
<div style="left:938px;top:235px;width:66px;height:18px;background:#e0e0e0;border:1px solid #777;border-bottom:0;border-radius:3px 3px 0 0;box-sizing:border-box"></div>
<div style="left:1005px;top:235px;width:89px;height:17px;background:#c4c4c4;border:1px solid #777;border-bottom:0;border-radius:3px 3px 0 0;box-sizing:border-box"></div>
<div class="t" style="left:941px;top:237px;letter-spacing:.4px">VS Output</div>
<div class="t" style="left:1008px;top:237px;letter-spacing:.4px">GS/DS Output</div>
<div style="left:938px;top:252px;width:462px;height:1px;background:#444"></div>
<div style="left:939px;top:253px;width:461px;height:16px;background:#f0f0f0"></div>
<div class="w" style="left:939px;top:270px;width:461px;height:186px"></div>
<div style="left:939px;top:269px;width:461px;height:1px;background:#333"></div>
<div class="mb t" style="left:942px;top:254px">VTX</div>
<div class="mb t" style="left:1019px;top:254px">IDX</div>
<div class="mb t" style="left:1100px;top:254px;font-weight:normal;letter-spacing:.95px;color:#333">_sig63._child0</div>
<div style="left:939px;top:270px;width:461px;height:21px;background:#7b86a0"></div>
<div style="left:1097px;top:292px;width:303px;height:64px;background:#95cfef"></div>
<div style="left:939px;top:291px;width:461px;height:1px;background:#aaa"></div>
<div style="left:939px;top:312px;width:461px;height:1px;background:#aaa"></div>
<div style="left:939px;top:334px;width:461px;height:1px;background:#ccc"></div>
<div style="left:939px;top:356px;width:461px;height:1px;background:#aaa"></div>
<div style="left:1015px;top:253px;width:1px;height:203px;background:#999"></div>
<div style="left:1195px;top:270px;width:1px;height:186px;background:#999"></div>
<div style="left:1294px;top:270px;width:1px;height:186px;background:#999"></div>
<div style="left:1393px;top:270px;width:1px;height:186px;background:#999"></div>
<div style="left:1092px;top:270px;width:5px;height:186px;background:#979797"></div>
<div style="left:1092px;top:253px;width:1px;height:17px;background:#444"></div>
<div class="m t" style="left:942px;top:273px;color:#c8d0e0">0</div><div class="m t" style="left:1019px;top:273px;color:#c8d0e0">0</div><div class="m t" style="left:1108px;top:273px;color:#d8e0f0;letter-spacing:.4px">0.00</div><div class="m t" style="left:1206px;top:273px;color:#d8e0f0;letter-spacing:.4px">0.00</div><div class="m t" style="left:1305px;top:273px;color:#d8e0f0;letter-spacing:.4px">0.00</div>
<div class="m t" style="left:942px;top:295px;color:#733">1</div><div class="m t" style="left:1019px;top:295px;color:#336">1</div><div class="m t" style="left:1108px;top:295px;letter-spacing:.4px">0.00</div><div class="m t" style="left:1206px;top:295px;letter-spacing:.4px">0.00</div><div class="m t" style="left:1305px;top:295px;letter-spacing:.4px">0.00</div>
<div class="m t" style="left:942px;top:317px">2</div><div class="m t" style="left:1019px;top:317px">2</div><div class="m t" style="left:1108px;top:317px;letter-spacing:.4px">0.00</div><div class="m t" style="left:1206px;top:317px;letter-spacing:.4px">0.00</div><div class="m t" style="left:1305px;top:317px;letter-spacing:.4px">0.00</div>
<div class="m t" style="left:942px;top:338px">3</div><div class="m t" style="left:1019px;top:338px">3</div><div class="m t" style="left:1108px;top:338px;letter-spacing:.4px">0.00</div><div class="m t" style="left:1206px;top:338px;letter-spacing:.4px">0.00</div><div class="m t" style="left:1305px;top:338px;letter-spacing:.4px">0.00</div>
<svg style="left:939px;top:456px" width="461" height="12"><rect width="461" height="12" fill="#e0e0e0"/><path d="M6 3L2.500 6 6 9M451 3l3.500 3L451 9" fill="none" stroke="#555" stroke-width="1.500"/><rect x="12" y="1" width="82" height="10" rx="4" fill="#6e6e6e"/></svg>

<!-- Preview -->
<div style="left:471px;top:472px;width:929px;height:1px;background:#888"></div>
<div class="bar" style="left:472px;top:473px;width:928px;height:14px"></div>
<div class="t" style="left:476px;top:473px;letter-spacing:.2px">Preview</div>
<div style="left:472px;top:487px;width:928px;height:1px;background:#999"></div>
<div style="left:472px;top:506px;width:928px;height:1px;background:#222"></div>
<div style="left:473px;top:489px;width:65px;height:18px;background:#e0e0e0;border:1px solid #777;border-bottom:0;border-radius:3px 3px 0 0;box-sizing:border-box"></div>
<div style="left:539px;top:489px;width:67px;height:17px;background:#c4c4c4;border:1px solid #777;border-bottom:0;border-radius:3px 3px 0 0;box-sizing:border-box"></div>
<div style="left:606px;top:489px;width:69px;height:17px;background:#c4c4c4;border:1px solid #777;border-bottom:0;border-radius:3px 3px 0 0;box-sizing:border-box"></div>
<div class="t" style="left:476px;top:491px;letter-spacing:.3px">VS In</div>
<div class="t" style="left:542px;top:491px;letter-spacing:.3px">VS Out</div>
<div class="t" style="left:609px;top:491px;letter-spacing:.35px">GS/DS Out</div>
<svg style="left:481px;top:513px" width="13" height="13"><circle cx="6.500" cy="6.500" r="4" fill="none" stroke="#aaa" stroke-width="2.400" stroke-dasharray="2 1"/><circle cx="6.500" cy="6.500" r="2" fill="#ddd" stroke="#aaa"/></svg>
<svg style="left:505px;top:513px" width="14" height="13"><path d="M2 2h8a3 3 0 0 1 0 7H2m0 0l3-2.500M2 9l3 2.500" fill="none" stroke="#8dc63f" stroke-width="2.200"/></svg>
<svg style="left:530px;top:513px" width="12" height="13"><path d="M1 12L8 4" stroke="#777" stroke-width="2"/><path d="M7 2l4 3-2 2-3-3z" fill="#e8a030"/></svg>
<div style="left:549px;top:510px;width:1px;height:21px;background:#444"></div>
<div class="t" style="left:552px;top:514px;letter-spacing:.2px">Controls</div>
<div class="w" style="left:597px;top:511px;width:64px;height:17px;border:1px solid #222;border-radius:2px"></div>
<div class="t" style="left:600px;top:513px;letter-spacing:.1px">Arcball</div>
<svg style="left:649px;top:517px" width="10" height="8"><path d="M1 1.500l4 4 4-4" fill="none" stroke="#222" stroke-width="1.300"/></svg>
<div style="left:663px;top:510px;width:1px;height:21px;background:#444"></div>
<div class="t" style="left:666px;top:514px;letter-spacing:.2px">Show</div>
<div style="left:696px;top:511px;width:155px;height:17px;border:1px solid #bbb;border-radius:2px;background:#e6e6e6"></div>
<div class="t" style="left:699px;top:513px;color:#b0b0b0;letter-spacing:.3px">This draw</div>
<svg style="left:839px;top:517px" width="10" height="8"><path d="M1 1.500l4 4 4-4" fill="none" stroke="#aaa" stroke-width="1.300"/></svg>
<div style="left:852px;top:510px;width:1px;height:21px;background:#444"></div>
<div class="t" style="left:855px;top:514px;letter-spacing:.15px">Solid Shading</div>
<div class="w" style="left:925px;top:511px;width:85px;height:17px;border:1px solid #222;border-radius:2px"></div>
<div class="t" style="left:927px;top:513px;letter-spacing:.3px">None</div>
<svg style="left:999px;top:517px" width="10" height="8"><path d="M1 1.500l4 4 4-4" fill="none" stroke="#222" stroke-width="1.300"/></svg>
<div style="left:1013px;top:510px;width:62px;height:20px;background:#c4c8d4;border:1px solid #999;box-sizing:border-box"></div>
<div class="t" style="left:1018px;top:514px;color:#a8a8b0;letter-spacing:.35px">Wireframe</div>
<div style="left:1079px;top:510px;width:124px;height:21px;background:#c4c8d4;border:1px solid #333;box-sizing:border-box"></div>
<svg style="left:1082px;top:514px" width="13" height="13"><path d="M6.500 1v11M1.500 3.500l10 6M11.500 3.500l-10 6" stroke="#f0a830" stroke-width="2.800"/></svg>
<div class="t" style="left:1098px;top:514px;letter-spacing:.33px;color:#222">Highlight Vertices</div>

<!-- viewport -->
<div style="left:481px;top:536px;width:914px;height:393px;background-color:#e0e0e0;background-image:conic-gradient(#e0e0e0 25%,#979797 0 50%,#e0e0e0 0 75%,#979797 0);background-size:102.670px 102.670px;background-position:0 0"></div>
<svg style="left:0;top:0" width="1400" height="953">
<rect x="838.500" y="633.500" width="198.500" height="197.500" fill="none" stroke="#9a9af5" stroke-width="1"/>
<path d="M838.700 633.500L1037 831H838.700z" fill="#f50000"/>
<path d="M838.700 633.500V831H1037" fill="none" stroke="#8a8af5" stroke-width="1"/>
<path d="M835 828h6.500v6.500H835z" fill="#2222ee"/><path d="M838 829v3h3" fill="none" stroke="#aab" stroke-width=".8"/>
<path d="M860 847L805 928.500" stroke="#5555ee" stroke-width="1" fill="none"/>
</svg>
<div style="left:469px;top:931px;width:931px;height:1px;background:#444"></div>
<div style="left:469px;top:933px;width:931px;height:1px;background:#999"></div>
<div style="left:470.500px;top:489px;width:1px;height:443px;background:#777"></div>
</body></html>
